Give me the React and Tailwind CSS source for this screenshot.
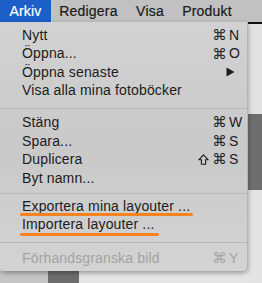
export default function App() {
  const font = { fontFamily: '"Liberation Sans", Arial, "DejaVu Sans", sans-serif' }

  const Row = ({ label, mod = '', k = '', shift = false, arrow = false, disabled = false, children, h = 'h-[18.5px]' }) => (
    <div className={`relative flex items-center ${h} pl-[22px] text-[14px] tracking-[0.15px] ${disabled ? 'text-[#a3a3a3]' : 'text-[#1c1c1c]'}`}>
      <span className="flex-1 whitespace-nowrap">{label}</span>
      {arrow ? (
        <svg width="9" height="10" viewBox="0 0 9 10" className="mr-[12px]">
          <polygon points="0.5,0.5 8.5,5 0.5,9.5" fill="#1c1c1c" />
        </svg>
      ) : (
        <>
          <span className="w-[41px] flex items-center justify-end gap-[3px] whitespace-nowrap text-[14.5px] leading-none" style={{ fontFamily: '"DejaVu Sans", sans-serif' }}>
            {shift && (
              <svg width="11" height="11" viewBox="0 0 11 11">
                <path d="M5.5 0.8 L10.2 5.8 H7.6 V10.2 H3.4 V5.8 H0.8 Z" fill="none" stroke="currentColor" strokeWidth="1.1" strokeLinejoin="round" />
              </svg>
            )}
            {mod}
          </span>
          <span className="w-[20px] pl-[2px]">{k}</span>
        </>
      )}
      {children}
    </div>
  )

  const Sep = ({ h, top }) => (
    <div className={`flex flex-col ${h}`}>
      <div className={top} />
      <div className="h-px bg-[#b7b7b7]" />
    </div>
  )

  return (
    <div className="relative w-[262px] h-[283px] overflow-hidden bg-[#e4e4e4] select-none" style={font}>
      {/* menu bar */}
      <div className="flex h-[22px] bg-[#c1c1c1] text-[14px] tracking-[0.2px] text-[#1a1a1a] [-webkit-text-stroke:0.2px_currentColor]">
        <div className="w-[51px] flex items-center justify-center bg-[#1c5fc9] text-white">Arkiv</div>
        <div className="w-[75px] flex items-center justify-center">Redigera</div>
        <div className="w-[48px] flex items-center justify-center">Visa</div>
        <div className="w-[66px] flex items-center justify-center">Produkt</div>
      </div>

      {/* content behind the menu */}
      <div className="flex h-[261px]">
        <div className="flex-1 flex flex-col">
          <div className="flex-1" />
          <div className="flex h-[12px]">
            <div className="w-[48px] bg-[#c6c6c6]" />
            <div className="w-[31px] bg-[#6d6d6d]" />
            <div className="flex-1 bg-[#e6e6e6]" />
          </div>
        </div>
        <div className="w-[14px] flex flex-col">
          <div className="h-[2px] bg-[#111111]" />
          <div className="h-[90px] bg-[#e2e2e2]" />
          <div className="h-[76px] bg-[#6e6e6e]" />
          <div className="flex-1 bg-[#e4e4e4]" />
        </div>
      </div>

      {/* dropdown menu */}
      <div className="absolute left-0 top-[22px] w-[248px] h-[249px] pt-[4.2px] rounded-b-[5px] bg-gradient-to-b from-[#d2d2d2] via-[#c9c9c9] to-[#d3d3d3] shadow-[0_2px_5px_rgba(0,0,0,0.35)] border-r border-[#b4b4b4]">
        <Row label="Nytt" mod="⌘" k="N" />
        <Row label="Öppna..." mod="⌘" k="O" />
        <Row label="Öppna senaste" arrow />
        <Row label="Visa alla mina fotoböcker" />
        <Sep h="h-[13.3px]" top="h-[7.8px]" />
        <Row label="Stäng" mod="⌘" k="W" />
        <Row label="Spara..." mod="⌘" k="S" />
        <Row label="Duplicera" mod="⌘" k="S" shift />
        <Row label="Byt namn..." />
        <Sep h="h-[9.4px]" top="h-[5.8px]" />
        <Row label="Exportera mina layouter ...">
          <div className="absolute left-[20px] top-[16.2px] w-[173px] h-[3px] rounded-full bg-[#f7821f]" />
        </Row>
        <Row label="Importera layouter ...">
          <div className="absolute left-[20px] top-[17.2px] w-[139px] h-[3px] rounded-full bg-[#f7821f]" />
        </Row>
        <Sep h="h-[15px]" top="h-[8px]" />
        <Row label="Förhandsgranska bild" mod="⌘" k="Y" disabled />
      </div>
    </div>
  )
}
